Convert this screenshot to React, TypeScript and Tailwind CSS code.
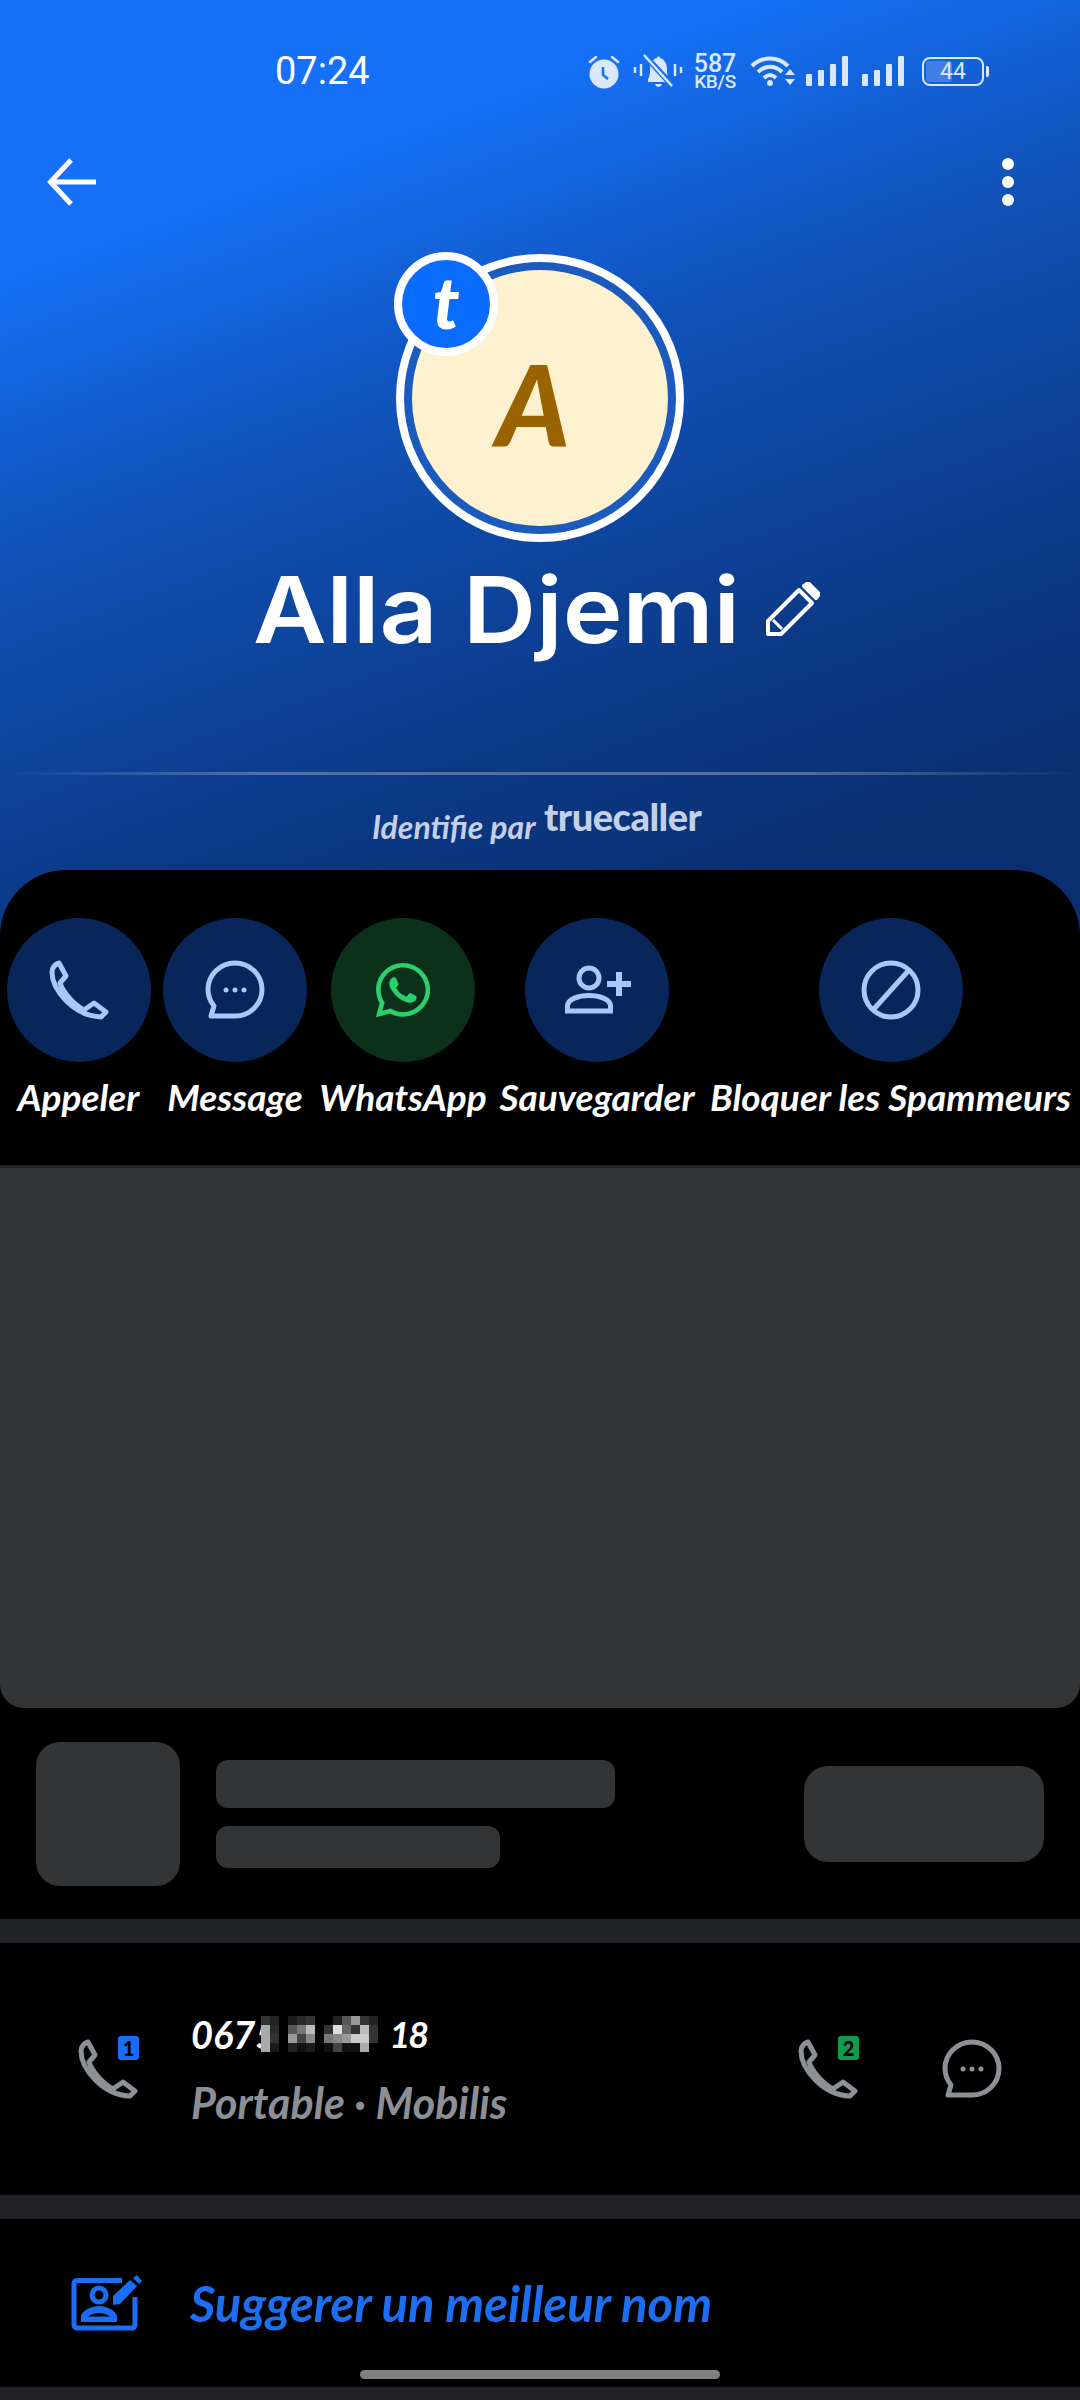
import { FaWhatsapp } from "react-icons/fa";

const PhoneIcon = ({ className }: { className: string }) => (
  <svg width="60" height="60" viewBox="0 0 60 60" fill="none" stroke="currentColor" strokeWidth="5" strokeLinejoin="round" className={className}>
    <path d="M10 3 L17 16 L11 23 C14 32 24 44 35 50 L45 43 L57 52 L52 57 C25 56 3 30 3 12 C3 8 6 4 10 3Z" />
  </svg>
);

const MessageIcon = ({ className }: { className: string }) => (
  <svg width="60" height="60" viewBox="0 0 60 60" fill="none" className={className}>
    <path d="M30 3 C45 3 57 15 57 29.500 C57 44 45 56 30 56 H6 L9 46 C5 41 3 35 3 29.500 C3 15 15 3 30 3Z" stroke="currentColor" strokeWidth="5" strokeLinejoin="round" />
    <circle cx="21" cy="30" r="2.500" fill="currentColor" />
    <circle cx="30" cy="30" r="2.500" fill="currentColor" />
    <circle cx="39" cy="30" r="2.500" fill="currentColor" />
  </svg>
);

const PersonAddIcon = () => (
  <svg width="72" height="60" viewBox="40 30 72 60" fill="none" stroke="currentColor" strokeWidth="5" className="text-[#a8c7fa]">
    <circle cx="68" cy="48" r="10" />
    <path d="M46.500 81 V76 C46.500 69 58 65.500 68 65.500 C78 65.500 89.500 69 89.500 76 V81 Z" />
    <path d="M98 42 V66 M86 54 H110" strokeWidth="6" />
  </svg>
);

const BlockIcon = () => (
  <svg width="60" height="60" viewBox="0 0 60 60" fill="none" stroke="currentColor" strokeWidth="5" className="text-[#a8c7fa]">
    <circle cx="30" cy="30" r="27" />
    <path d="M12 50 L48 10" />
  </svg>
);

const SuggestIcon = () => (
  <svg width="74" height="60" viewBox="20 12 74 60" className="text-[#1a6ef5]" fill="currentColor">
    <path d="M72 19.500 H27 a3 3 0 0 0 -3 3 V64 a3 3 0 0 0 3 3 H82 a3 3 0 0 0 3 -3 V36" fill="none" stroke="currentColor" strokeWidth="5" />
    <circle cx="49" cy="34" r="7" fill="none" stroke="currentColor" strokeWidth="5" />
    <path fillRule="evenodd" d="M31 61 V56 C31 50 41 45 49 45 C57 45 67 50 67 56 V61 Z M38 55.500 C41 53 45 52 49 52 C53 52 57 53 60 55.500 Z" />
    <path d="M63 35 L80 19 L87 25 L70 43 L63 44 Z" />
    <path d="M83 17 L87 14 L92 20 L89 23 Z" />
  </svg>
);

const PencilIcon = () => (
  <svg width="54" height="54" viewBox="0 0 54 54" fill="none" stroke="white" strokeWidth="4" strokeLinejoin="round" className="ml-[26px] mt-[-2px]">
    <path d="M2 52 V39 L33 8 L46 21 L15 52 Z" />
    <path d="M7 38 L16 47" strokeWidth="3" />
    <path d="M38 4 L42 1 L53 12 L50 16 Z" fill="white" />
  </svg>
);

const Signal = () => (
  <div className="flex items-end gap-[6px] h-[30px]">
    <div className="w-[6px] h-[12px] rounded-[1px] bg-[#dbe7fb]" />
    <div className="w-[6px] h-[16px] rounded-[1px] bg-[#dbe7fb]" />
    <div className="w-[6px] h-[22px] rounded-[1px] bg-[#dbe7fb]" />
    <div className="w-[6px] h-[30px] rounded-[1px] bg-[#dbe7fb]" />
  </div>
);

const StatusIcons = () => (
  <div className="flex items-center text-[#dbe7fb]">
    {/* alarm */}
    <svg width="34" height="34" viewBox="0 0 34 34" className="mt-[1px]">
      <circle cx="17" cy="19" r="14.500" fill="currentColor" />
      <path d="M3 7 L9 2 M31 7 L25 2" stroke="currentColor" strokeWidth="2.500" strokeLinecap="round" />
      <path d="M16 12 V20 L21 24" stroke="#1570f5" strokeWidth="2.500" fill="none" />
    </svg>
    {/* bell off */}
    <svg width="50" height="36" viewBox="0 0 50 36" className="ml-[12px]">
      <path d="M15 26 C17 23 17 20 17 15 C17 9 20 6 24 5 C24 3 27 3 27 5 C31 6 34 10 34 16 C34 20 34 23 37 27 L37 29 L15 29 Z" fill="currentColor" />
      <path d="M22 31 H29 C28 35 23 35 22 31Z" fill="currentColor" />
      <path d="M12 3 L40 33" stroke="#1570f5" strokeWidth="6" />
      <path d="M11 2 L39 33" stroke="currentColor" strokeWidth="2.500" />
      <path d="M2 14 V20 M8 11 V23 M42 11 V23 M48 14 V20" stroke="currentColor" strokeWidth="2.500" />
    </svg>
    <div className="ml-[11px] w-[42px] flex flex-col items-center leading-none font-['Roboto',sans-serif] font-medium">
      <span className="text-[25px] h-[21px] leading-[21px]">587</span>
      <span className="text-[19px] h-[16px] leading-[16px] tracking-[-0.3px] whitespace-nowrap">KB/S</span>
    </div>
    {/* wifi */}
    <svg width="46" height="32" viewBox="0 0 46 32" className="ml-[14px]">
      <path d="M2 11 C12 1 28 1 38 11 M8 17 C15 10 25 10 32 17 M14 23 C18 19 22 19 26 23" fill="none" stroke="currentColor" strokeWidth="4" />
      <circle cx="20" cy="28" r="3" fill="currentColor" />
      <path d="M35 20 L40 14 L45 20 Z M35 24 L45 24 L40 30 Z" fill="currentColor" />
    </svg>
    <div className="ml-[10px]"><Signal /></div>
    <div className="ml-[14px]"><Signal /></div>
    <div className="ml-[18px] flex items-center">
      <div className="relative w-[62px] h-[29px] rounded-[8px] border-[2px] border-[#dbe7fb] overflow-hidden flex items-center justify-center">
        <div className="absolute left-[2px] top-[2px] bottom-[2px] w-[26px] rounded-[3px] bg-[#3f7fe6]" />
        <span className="relative text-[23px] leading-none font-['Roboto',sans-serif] text-[#dbe7fb]">44</span>
      </div>
      <div className="ml-[2px] w-[3px] h-[11px] rounded-r-[2px] bg-[#dbe7fb]" />
    </div>
  </div>
);

const actions = [
  { label: "Appeler", width: "w-[157px]", circle: "bg-[#08265a]", icon: <PhoneIcon className="text-[#a8c7fa]" /> },
  { label: "Message", width: "w-[156px]", circle: "bg-[#08265a]", icon: <MessageIcon className="text-[#a8c7fa]" /> },
  { label: "WhatsApp", width: "w-[180px]", circle: "bg-[#0b3119]", icon: <FaWhatsapp size={62} className="text-[#2bd06c]" /> },
  { label: "Sauvegarder", width: "w-[208px]", circle: "bg-[#08265a]", icon: <PersonAddIcon /> },
  { label: "Bloquer les Spammeurs", width: "w-[379px]", circle: "bg-[#08265a]", icon: <BlockIcon /> },
];

// pixelated digits of the phone number, 13 x 4 cells
const mosaic = [
  "bg-[#333333]", "bg-[#222222]", "bg-black", "bg-[#1a1a1a]", "bg-[#2a2a2a]", "bg-[#333333]", "bg-black", "bg-black", "bg-[#222222]", "bg-[#555555]", "bg-[#999999]", "bg-[#333333]", "bg-[#222222]",
  "bg-[#aaaaaa]", "bg-[#2a2a2a]", "bg-black", "bg-[#555555]", "bg-[#777777]", "bg-[#bbbbbb]", "bg-black", "bg-[#333333]", "bg-[#dddddd]", "bg-[#666666]", "bg-[#333333]", "bg-[#bbbbbb]", "bg-[#333333]",
  "bg-[#aaaaaa]", "bg-[#333333]", "bg-black", "bg-[#999999]", "bg-[#444444]", "bg-[#888888]", "bg-black", "bg-[#777777]", "bg-[#888888]", "bg-[#999999]", "bg-[#cccccc]", "bg-[#cccccc]", "bg-[#333333]",
  "bg-[#aaaaaa]", "bg-[#1a1a1a]", "bg-black", "bg-[#222222]", "bg-[#111111]", "bg-[#1a1a1a]", "bg-black", "bg-[#111111]", "bg-[#444444]", "bg-[#111111]", "bg-[#111111]", "bg-[#aaaaaa]", "bg-black",
];

const Divider = () => <div className="h-[24px] bg-[#212226] shrink-0" />;

const App = () => {
  return (
    <div className="relative w-[1080px] h-[2400px] overflow-hidden bg-black font-['Lato',sans-serif]">
      <div className="bg-[linear-gradient(160deg,#1672fb_0px,#1570f6_260px,#1052b8_520px,#0c3a88_860px,#0a2f70_1100px)]">
        <div className="pt-[36px]">
          <div className="h-[70px] pl-[275px] pr-[91px] flex items-center justify-between">
            <span className="text-[38px] text-white font-['Roboto',sans-serif] leading-none">07:24</span>
            <StatusIcons />
          </div>
          <div className="mt-[28px] h-[96px] pl-[47px] pr-[66px] flex items-center justify-between">
            <svg width="50" height="48" viewBox="0 0 50 48" fill="none" stroke="white" strokeWidth="5">
              <path d="M49 24 H4 M24 2 L3.500 24 L24 46" />
            </svg>
            <div className="flex flex-col gap-[6px]">
              <div className="w-[12px] h-[12px] rounded-full bg-white" />
              <div className="w-[12px] h-[12px] rounded-full bg-white" />
              <div className="w-[12px] h-[12px] rounded-full bg-white" />
            </div>
          </div>

          <div className="mt-[24px] flex justify-center">
            <div className="relative w-[288px] h-[288px] rounded-full border-[8px] border-white bg-[#1a5bbd] p-[8px]">
              <div className="w-full h-full rounded-full bg-[#fef1cf] flex items-center justify-center">
                <span className="text-[112px] leading-none italic font-black text-[#996300] ml-[-14px] mt-[12px]">A</span>
              </div>
              <div className="absolute left-[-10px] top-[-10px] w-[104px] h-[104px] rounded-full border-[8px] border-white bg-[#0a6cff] flex items-center justify-center">
                <span className="text-[72px] leading-none italic font-black text-white mt-[-6px]">t</span>
              </div>
            </div>
          </div>

          <div className="mt-[18px] h-[100px] pr-[7px] flex items-center justify-center">
            <span className="w-[487px] text-center whitespace-nowrap text-[92px] leading-none font-semibold text-white font-['Inter',sans-serif] scale-x-[1.1]">Alla Djemi</span>
            <PencilIcon />
          </div>

          <div className="mt-[112px] h-[3px] bg-[linear-gradient(90deg,transparent,rgba(255,255,255,0.28)_25%,rgba(255,255,255,0.28)_75%,transparent)]" />

          <div className="mt-[20px] h-[50px] pl-[372px] flex items-center">
            <span className="w-[172px] text-[32px] italic font-bold text-[#c3d0e8] mt-[14px] whitespace-nowrap">Identifie par</span>
            <span className="text-[38px] font-black text-[#c3d0e8] tracking-[-0.5px] mt-[-8px]">truecaller</span>
          </div>
        </div>

        <div className="mt-[25px] h-[295px] rounded-t-[66px] bg-black pt-[48px] flex items-start">
          {actions.map((a) => (
            <div key={a.label} className={`${a.width} flex flex-col items-center`}>
              <div className={`w-[144px] h-[144px] rounded-full flex items-center justify-center ${a.circle}`}>{a.icon}</div>
              <span className="mt-[15px] text-[37px] leading-[40px] italic font-bold text-white whitespace-nowrap">{a.label}</span>
            </div>
          ))}
        </div>
      </div>

      <div className="h-[3px] bg-[#222426]" />
      <div className="h-[540px] rounded-b-[24px] bg-[#333436]" />

      <div className="h-[211px] pl-[36px] pr-[36px] pt-[34px] flex items-start">
        <div className="w-[144px] h-[144px] rounded-[24px] bg-[#333436]" />
        <div className="ml-[36px] h-[144px] flex flex-col justify-center gap-[18px]">
          <div className="w-[399px] h-[48px] rounded-[12px] bg-[#333436]" />
          <div className="w-[284px] h-[42px] rounded-[12px] bg-[#333436]" />
        </div>
        <div className="ml-auto mt-[24px] w-[240px] h-[96px] rounded-[24px] bg-[#333436]" />
      </div>
      <Divider />

      <div className="h-[252px] pl-[78px] pr-[78px] flex items-center">
        <div className="relative w-[60px] h-[60px]">
          <PhoneIcon className="text-[#8d9196]" />
          <div className="absolute left-[40px] top-[-3px] w-[21px] h-[24px] rounded-[3px] bg-[#1a6ef5] flex items-center justify-center text-[20px] leading-none font-black text-black">1</div>
        </div>
        <div className="ml-[53px] flex flex-col">
          <div className="flex items-center h-[36px]">
            <span className="text-[38px] leading-none italic font-bold text-white">0675</span>
            <div className="ml-[-16px] grid grid-cols-[repeat(13,9px)] grid-rows-[repeat(4,9px)]">
              {mosaic.map((c, i) => (
                <div key={i} className={c} />
              ))}
            </div>
            <span className="ml-[11px] text-[36px] leading-none italic font-bold text-white tracking-[-2px]">18</span>
          </div>
          <span className="mt-[32px] text-[43px] leading-[38px] italic font-bold text-[#8c9096] whitespace-nowrap">Portable · Mobilis</span>
        </div>
        <div className="ml-auto relative w-[60px] h-[60px]">
          <PhoneIcon className="text-[#8d9196]" />
          <div className="absolute left-[40px] top-[-3px] w-[21px] h-[24px] rounded-[3px] bg-[#129a4e] flex items-center justify-center text-[20px] leading-none font-black text-black">2</div>
        </div>
        <div className="ml-[84px]">
          <MessageIcon className="text-[#8d9196]" />
        </div>
      </div>
      <Divider />

      <div className="h-[168px] pl-[70px] flex items-center">
        <SuggestIcon />
        <span className="ml-[46px] text-[49px] leading-none italic font-bold text-[#1b6ff5] whitespace-nowrap">Suggerer un meilleur nom</span>
      </div>
      <Divider />

      <div className="absolute left-[360px] top-[2370px] w-[360px] h-[9px] rounded-full bg-[#808080]" />
    </div>
  );
};

export default App;
